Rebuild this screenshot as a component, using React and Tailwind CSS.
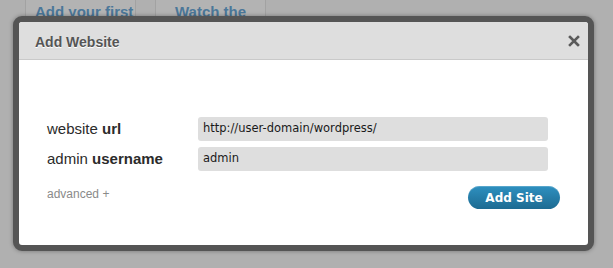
export default function App() {
  return (
    <div className="relative h-[268px] w-[613px] overflow-hidden bg-[#b0b0b0] font-['Liberation_Sans',Arial,sans-serif]">
      {/* background page tabs, mostly hidden behind the modal */}
      <div className="flex pl-[25px]">
        <div className="h-[16px] w-[111px] overflow-hidden whitespace-nowrap border-x border-[#a2a2a2] bg-[#b3b3b3] pl-[9px] pt-[3px] text-[15px] font-bold leading-[18px] text-[#4b7799]">
          Add your first
        </div>
        <div className="ml-[19px] h-[16px] w-[111px] overflow-hidden whitespace-nowrap border-x border-[#a2a2a2] bg-[#b3b3b3] pl-[19px] pt-[3px] text-[15px] font-bold leading-[18px] text-[#4b7799]">
          Watch the
        </div>
      </div>

      {/* modal */}
      <div className="absolute left-[13px] top-[16px] w-[581px] rounded-[9px] border-[6px] border-[#555555] bg-white shadow-[0_0_4px_rgba(0,0,0,0.35)]">
        <div className="flex h-[38px] items-center justify-between rounded-t-[3px] border-b border-[#c9c9c9] bg-[#dedede] pl-[16px] pr-[8px] pt-[3px]">
          <span className="text-[14px] font-bold text-[#555555] [text-shadow:0_1px_0_#fff]">Add Website</span>
          <svg width="12" height="12" viewBox="0 0 12 12" className="mb-[3px]">
            <path d="M2 2 L10 10 M10 2 L2 10" stroke="#5a5a5a" strokeWidth="2.6" strokeLinecap="square" />
          </svg>
        </div>

        <div className="h-[185px] rounded-b-[3px] pl-[28px] pt-[57px]">
          <div className="flex items-center">
            <div className="w-[151px] text-[15px] text-[#2b2b2b]">
              website <span className="font-bold">url</span>
            </div>
            <div className="flex h-[24px] w-[350px] items-center rounded-[3px] bg-[#dedede] px-[5px] font-['DejaVu_Sans',Verdana,sans-serif] text-[11.5px] text-[#1a1a1a]">
              http://user-domain/wordpress/
            </div>
          </div>
          <div className="mt-[6px] flex items-center">
            <div className="w-[151px] text-[15px] text-[#2b2b2b]">
              admin <span className="font-bold">username</span>
            </div>
            <div className="flex h-[24px] w-[350px] items-center rounded-[3px] bg-[#dedede] px-[5px] font-['DejaVu_Sans',Verdana,sans-serif] text-[11.5px] text-[#1a1a1a]">
              admin
            </div>
          </div>

          <div className="mt-[15px] flex items-start justify-between pr-[28px]">
            <span className="mt-[-1px] text-[12px] text-[#8a8a8a]">advanced +</span>
            <button className="h-[23px] w-[92px] rounded-full bg-gradient-to-b from-[#2e90c0] to-[#1d6b92] font-['DejaVu_Sans',Verdana,sans-serif] text-[12px] font-bold text-white shadow-[inset_0_1px_0_rgba(255,255,255,0.2)]">
              Add Site
            </button>
          </div>
        </div>
      </div>
    </div>
  );
}
